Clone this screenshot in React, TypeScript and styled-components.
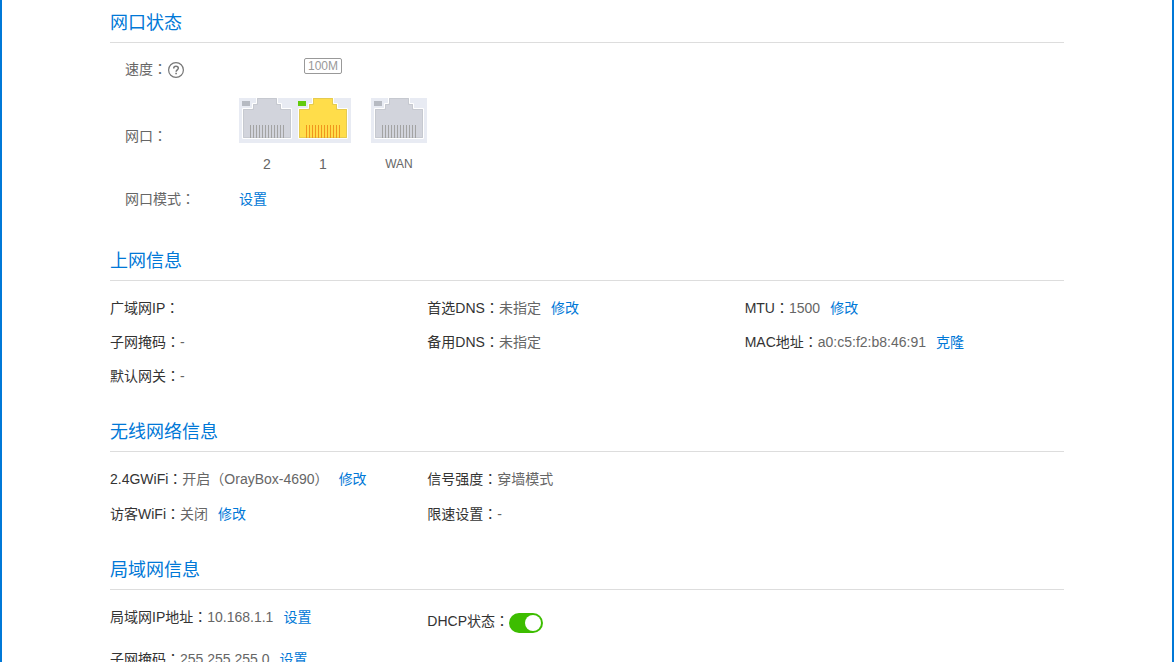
import React from 'react';
import styled, { createGlobalStyle } from 'styled-components';

const GlobalStyle = createGlobalStyle`
  * { box-sizing: border-box; }
  body {
    margin: 0;
    background: #fff;
    color: #333;
    font: 14px/20px "Liberation Sans", "Noto Sans CJK SC", sans-serif;
  }
`;

const Page = styled.main`
  height: 100vh;
  overflow-y: auto;
  scrollbar-width: none;
  padding: 5px 108px 0;
  border: solid #0078d7;
  border-width: 0 2px;
`;

const Section = styled.section`
  margin-bottom: 20px;
`;

const Title = styled.h2`
  margin: 0;
  border-bottom: 1px solid #ddd;
  color: #0078d7;
  font-size: 18px;
  font-weight: 400;
  line-height: 37px;
`;

const PortBody = styled.div`
  padding: 15px 15px 9px;
  color: #666;
`;

const PortRow = styled.div<{ $align?: string; $height?: number }>`
  display: grid;
  grid-template-columns: 114px 1fr;
  align-items: ${(p) => p.$align ?? 'center'};
  min-height: ${(p) => p.$height ?? 0}px;
`;

const ModeRow = styled(PortRow)`
  margin-top: 10px;
`;

const PortLabel = styled.div`
  display: flex;
  align-items: center;
  line-height: 22px;
`;

const HelpButton = styled.button`
  display: flex;
  padding: 2px 0 0 1px;
  border: 0;
  background: none;
  color: #777;
  cursor: pointer;
`;

const Ports = styled.div`
  display: grid;
  grid-template-columns: 56px 56px 56px;
  justify-items: center;
`;

const SpeedBadge = styled.span`
  grid-column: 2;
  height: 16px;
  padding: 0 3px;
  border: 1px solid #999;
  border-radius: 2px;
  color: #999;
  font-size: 12px;
  line-height: 14px;
`;

const PortItem = styled.figure<{ $apart?: boolean }>`
  display: flex;
  flex-direction: column;
  align-items: center;
  gap: 11px;
  margin: 0 0 0 ${(p) => (p.$apart ? 20 : 0)}px;
  width: 56px;
`;

const PortList = styled.div`
  display: flex;
`;

const PortName = styled.figcaption<{ $small?: boolean }>`
  font-size: ${(p) => (p.$small ? 12 : 14)}px;
  line-height: 20px;
`;

const Info = styled.div`
  padding: 10px 2px 1px 0;
`;

const InfoRow = styled.div<{ $height?: number }>`
  display: grid;
  grid-template-columns: repeat(3, 1fr);
  min-height: ${(p) => p.$height ?? 34}px;
`;

const Cell = styled.div`
  display: flex;
  align-items: center;
  align-self: start;
  height: 34px;
  white-space: nowrap;
`;

const SwitchCell = styled.label`
  display: flex;
  align-items: center;
  white-space: nowrap;
`;

const Value = styled.span`
  color: #666;
`;

/* The Traditional face centres full-width punctuation in its cell. */
const Centred = styled.span`
  font-family: "Noto Sans CJK TC", sans-serif;
  line-height: 1;
`;

const Link = styled.a`
  color: #0078d7;
  text-decoration: none;
`;

const Action = styled(Link)`
  margin-left: 10px;
`;

const Switch = styled.input`
  appearance: none;
  display: flex;
  width: 34px;
  height: 20px;
  margin: 4px 0 0;
  padding: 2px;
  border-radius: 10px;
  background: #ccc;
  cursor: pointer;

  &::before {
    content: "";
    width: 16px;
    height: 16px;
    border-radius: 50%;
    background: #fff;
  }

  &:checked {
    justify-content: flex-end;
    background: #3dbd00;
  }
`;

const Colon = () => <Centred>：</Centred>;

const HelpIcon = () => (
  <svg width="16" height="16" viewBox="0 0 16 16" fill="none" stroke="currentColor">
    <circle cx="8" cy="8" r="7.4" strokeWidth="1.2" />
    <path d="M5.7 6.4C5.7 4.9 6.7 4.2 8 4.2s2.3.8 2.3 2c0 1.6-2.2 1.7-2.2 3.5" strokeWidth="1.5" />
    <path d="M8.1 10.8v1.5" strokeWidth="1.6" />
  </svg>
);

const idle = { body: '#d2d4dc', edge: '#c6c9d0', pin: '#a3a3a3', led: '#b6bac2' };
const live = { body: '#ffdd4a', edge: '#e5cb50', pin: '#f0961c', led: '#62cb0c' };

const Jack = ({ active }: { active?: boolean }) => {
  const c = active ? live : idle;
  return (
    <svg width="56" height="45" viewBox="0 0 56 45">
      <rect width="56" height="45" fill="#e8ebf3" />
      <path
        d="M17.5-1V5.5H13.5V10.5H3.5V40.5H52.5V10.5H42.5V5.5H38.5V-1"
        fill={c.body}
        stroke="#fff"
      />
      <path
        d="M18.5 .5V6.5H14.5V11.5H4.5V39.5H51.5V11.5H41.5V6.5H37.5V.5Z"
        fill="none"
        stroke={c.edge}
      />
      <rect x="3" y="3" width="8" height="5" fill={c.led} />
      {Array.from({ length: 12 }, (_, i) => (
        <rect key={i} x={11 + i * 3} y="27" width="1" height="13" fill={c.pin} />
      ))}
    </svg>
  );
};

type FieldProps = { label: string; action?: string; children?: React.ReactNode };

const Field = ({ label, action, children }: FieldProps) => (
  <Cell>
    <span>{label}<Colon /></span>
    <Value>{children}</Value>
    {action && <Action href="#">{action}</Action>}
  </Cell>
);

export default function App() {
  return (
    <>
      <GlobalStyle />
      <Page>
        <Section>
          <Title>网口状态</Title>
          <PortBody>
            <PortRow $align="start" $height={40}>
              <PortLabel>
                <span>速度<Colon /></span>
                <HelpButton type="button" aria-label="速度"><HelpIcon /></HelpButton>
              </PortLabel>
              <Ports><SpeedBadge>100M</SpeedBadge></Ports>
            </PortRow>
            <PortRow>
              <PortLabel><span>网口<Colon /></span></PortLabel>
              <PortList>
                <PortItem><Jack /><PortName>2</PortName></PortItem>
                <PortItem><Jack active /><PortName>1</PortName></PortItem>
                <PortItem $apart><Jack /><PortName $small>WAN</PortName></PortItem>
              </PortList>
            </PortRow>
            <ModeRow $height={30}>
              <PortLabel><span>网口模式<Colon /></span></PortLabel>
              <Link href="#">设置</Link>
            </ModeRow>
          </PortBody>
        </Section>

        <Section>
          <Title>上网信息</Title>
          <Info>
            <InfoRow>
              <Field label="广域网IP" />
              <Field label="首选DNS" action="修改">未指定</Field>
              <Field label="MTU" action="修改">1500</Field>
            </InfoRow>
            <InfoRow>
              <Field label="子网掩码">-</Field>
              <Field label="备用DNS">未指定</Field>
              <Field label="MAC地址" action="克隆">a0:c5:f2:b8:46:91</Field>
            </InfoRow>
            <InfoRow>
              <Field label="默认网关">-</Field>
            </InfoRow>
          </Info>
        </Section>

        <Section>
          <Title>无线网络信息</Title>
          <Info>
            <InfoRow $height={35}>
              <Field label="2.4GWiFi" action="修改">开启（OrayBox-4690）</Field>
              <Field label="信号强度">穿墙模式</Field>
            </InfoRow>
            <InfoRow>
              <Field label="访客WiFi" action="修改">关闭</Field>
              <Field label="限速设置">-</Field>
            </InfoRow>
          </Info>
        </Section>

        <Section>
          <Title>局域网信息</Title>
          <Info>
            <InfoRow $height={42}>
              <Field label="局域网IP地址" action="设置">10.168.1.1</Field>
              <SwitchCell>
                <span>DHCP状态<Colon /></span>
                <Switch type="checkbox" role="switch" defaultChecked />
              </SwitchCell>
            </InfoRow>
            <InfoRow>
              <Field label="子网掩码" action="设置">255.255.255.0</Field>
            </InfoRow>
          </Info>
        </Section>
      </Page>
    </>
  );
}
